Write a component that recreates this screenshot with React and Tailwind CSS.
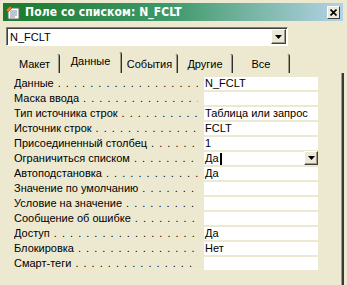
import React from 'react'

const rows = [
  { label: 'Данные', value: 'N_FCLT' },
  { label: 'Маска ввода', value: '' },
  { label: 'Тип источника строк', value: 'Таблица или запрос' },
  { label: 'Источник строк', value: 'FCLT' },
  { label: 'Присоединенный столбец', value: '1' },
  { label: 'Ограничиться списком', value: 'Да', active: true },
  { label: 'Автоподстановка', value: 'Да' },
  { label: 'Значение по умолчанию', value: '' },
  { label: 'Условие на значение', value: '' },
  { label: 'Сообщение об ошибке', value: '' },
  { label: 'Доступ', value: 'Да' },
  { label: 'Блокировка', value: 'Нет' },
  { label: 'Смарт-теги', value: '' },
]

const tabs = [
  { name: 'Макет', w: 'w-[50px]' },
  { name: 'Данные', w: 'w-[62px]', selected: true },
  { name: 'События', w: 'w-[56px]' },
  { name: 'Другие', w: 'w-[55px]' },
  { name: 'Все', w: 'w-[57px]' },
]

const dots = '. '.repeat(60)

function DropButton({ className }) {
  return (
    <div
      className={
        'shrink-0 flex items-center justify-center bg-[#ECE9D8] border border-t-white border-l-white border-b-[#404040] border-r-[#404040] shadow-[inset_-1px_-1px_0_#9d9a8a] ' +
        className
      }
    >
      <svg width="7" height="4" viewBox="0 0 7 4">
        <path d="M0 0h7L3.5 4z" fill="#000" />
      </svg>
    </div>
  )
}

export default function App() {
  return (
    <div
      className="w-[347px] h-[285px] overflow-hidden bg-[#EDE9D1] text-black text-[11px] relative"
      style={{ fontFamily: '"Liberation Sans", Arial, sans-serif' }}
    >
      {/* Title bar */}
      <div className="pt-[3px] pl-[3px] pr-[4px]">
        <div className="h-[18px] flex items-center bg-gradient-to-r from-[#1a7a2a] via-[#3f9a6c] to-[#b3d3e6]">
          <svg width="16" height="15" viewBox="0 0 16 15" className="ml-[2px] mr-[4px]">
            <rect x="3" y="3" width="11" height="11" fill="#fff" stroke="#6b6b6b" />
            <path d="M5 6h7M5 8h7M5 10h7M5 12h5" stroke="#7a8aa0" />
            <path d="M1 5l4-4 2 2-4 4z" fill="#e2802a" stroke="#8a3c10" strokeWidth="0.6" />
          </svg>
          <span
            className="text-white font-bold text-[12px] leading-none tracking-[0.1px]"
            style={{ fontFamily: '"DejaVu Sans Condensed", "Liberation Sans", sans-serif' }}
          >
            Поле со списком: N_FCLT
          </span>
          <div className="ml-auto mr-[3px] w-[13px] h-[13px] flex items-center justify-center bg-[#ECE9D8] border border-t-white border-l-white border-b-[#404040] border-r-[#404040]">
            <svg width="7" height="7" viewBox="0 0 7 7">
              <path d="M0.5 0.5l6 6M6.5 0.5l-6 6" stroke="#000" strokeWidth="1.6" />
            </svg>
          </div>
        </div>
      </div>

      {/* Object selector */}
      <div className="mt-[6px] ml-[6px] w-[282px] h-[19px] flex bg-white border border-t-[#808080] border-l-[#808080] border-b-white border-r-white shadow-[inset_1px_1px_0_#404040]">
        <span className="pl-[3px] pt-[2px] leading-[14px] flex-1">N_FCLT</span>
        <DropButton className="w-[15px] h-[15px] mt-[1px] mr-[1px]" />
      </div>

      {/* Tabs */}
      <div className="mt-[6px] ml-[10px] h-[21px] flex items-end">
        {tabs.map((t) => (
          <div
            key={t.name}
            className={
              t.selected
                ? t.w + ' h-[21px] flex justify-center pt-[3px] border-r border-[#303030] rounded-tr-[2px] shadow-[inset_-1px_0_0_#9d9a8a]'
                : t.w + ' h-[19px] flex justify-center pt-[4px] border-r border-[#303030] rounded-tr-[2px] shadow-[inset_-1px_0_0_#9d9a8a]'
            }
          >
            <span className="leading-[13px]">{t.name}</span>
          </div>
        ))}
      </div>

      {/* Property rows */}
      <div className="h-[212px] mr-[3px] border-r-2 border-[#3a3a3a] shadow-[inset_-1px_0_0_#9d9a8a] pt-[4px]">
        {rows.map((r) => (
          <div key={r.label} className="h-[15px] flex items-start pl-[14px]">
            <div className="w-[184px] h-[13px] flex overflow-hidden whitespace-nowrap leading-[13px]">
              <span className="shrink-0">{r.label}</span>
              <span className="ml-[4px] tracking-[1px]">{dots}</span>
            </div>
            <div className="ml-[6px] w-[114px] h-[13px] bg-white flex items-center">
              <span className="pl-[1px] leading-[13px] whitespace-nowrap overflow-hidden">{r.value}</span>
              {r.active && (
                <>
                  <span className="w-[2px] h-[12px] bg-black ml-[1px]" />
                  <DropButton className="ml-auto w-[14px] h-[14px] -mt-[1px]" />
                </>
              )}
            </div>
          </div>
        ))}
      </div>
    </div>
  )
}
